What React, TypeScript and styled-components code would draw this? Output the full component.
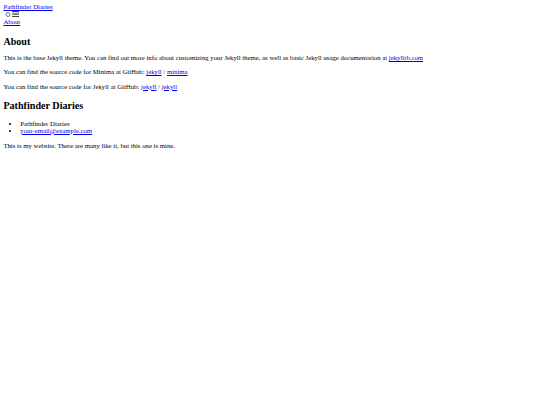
import styled, { createGlobalStyle } from 'styled-components';

const GlobalStyle = createGlobalStyle`
  html {
    font-size: 6.75px;
  }
  body {
    margin: 0.5rem;
    font-family: "Liberation Serif", "Times New Roman", serif;
    font-size: 1rem;
    color: #000;
    background: #fff;
  }
  a {
    color: #0000ee;
  }
`;

const SiteHeader = styled.header``;

const SiteTitle = styled.a`
  color: #0000ee;
`;

const SiteNav = styled.nav``;

const NavTrigger = styled.input`
  width: 0.8125rem;
  height: 0.8125rem;
  margin: 0.1875rem 0.1875rem 0.1875rem 0.25rem;
  vertical-align: baseline;
`;

const MenuIcon = styled.span`
  svg {
    width: 1.125rem;
    height: 0.9375rem;
    fill: #424242;
  }
`;

const PageLink = styled.a``;

const PostTitle = styled.h2`
  font-size: 1.5em;
  margin: 10.4px 0 7.4px;
  font-weight: bold;
`;

const FooterHeading = styled.h2`
  font-size: 1.5em;
  margin: 10.6px 0 8.4px;
  font-weight: bold;
`;

const Para = styled.p`
  margin: 7.3px 0;
`;

const ContactList = styled.ul`
  margin: 1em 0 7.75px;
  padding-left: 2.5em;
  list-style: disc;
`;

export default function App() {
  return (
    <>
      <GlobalStyle />
      <SiteHeader>
        <div>
          <SiteTitle href="#">Pathfinder Diaries</SiteTitle>
          <SiteNav>
            <NavTrigger type="checkbox" id="nav-trigger" />
            <label htmlFor="nav-trigger">
              <MenuIcon>
                <svg viewBox="0 0 18 15">
                  <path d="M18,1.484c0,0.82-0.665,1.484-1.484,1.484H1.484C0.665,2.969,0,2.304,0,1.484l0,0C0,0.665,0.665,0,1.484,0h15.032C17.335,0,18,0.665,18,1.484L18,1.484z M18,7.516C18,8.335,17.335,9,16.516,9H1.484C0.665,9,0,8.335,0,7.516l0,0c0-0.82,0.665-1.484,1.484-1.484h15.032C17.335,6.031,18,6.696,18,7.516L18,7.516z M18,13.516C18,14.335,17.335,15,16.516,15H1.484C0.665,15,0,14.335,0,13.516l0,0c0-0.82,0.665-1.483,1.484-1.483h15.032C17.335,12.031,18,12.695,18,13.516L18,13.516z" />
                </svg>
              </MenuIcon>
            </label>
            <div>
              <PageLink href="#">About</PageLink>
            </div>
          </SiteNav>
        </div>
      </SiteHeader>
      <main>
        <article>
          <PostTitle>About</PostTitle>
          <Para>
            This is the base Jekyll theme. You can find out more info about customizing your Jekyll theme, as well as basic Jekyll usage documentation at{' '}
            <a href="#">jekyllrb.com</a>
          </Para>
          <Para>
            You can find the source code for Minima at GitHub: <a href="#">jekyll</a> / <a href="#">minima</a>
          </Para>
          <Para>
            You can find the source code for Jekyll at GitHub: <a href="#">jekyll</a> / <a href="#">jekyll</a>
          </Para>
        </article>
      </main>
      <footer>
        <FooterHeading>Pathfinder Diaries</FooterHeading>
        <ContactList>
          <li>Pathfinder Diaries</li>
          <li>
            <a href="#">your-email@example.com</a>
          </li>
        </ContactList>
        <Para>This is my website. There are many like it, but this one is mine.</Para>
      </footer>
    </>
  );
}
